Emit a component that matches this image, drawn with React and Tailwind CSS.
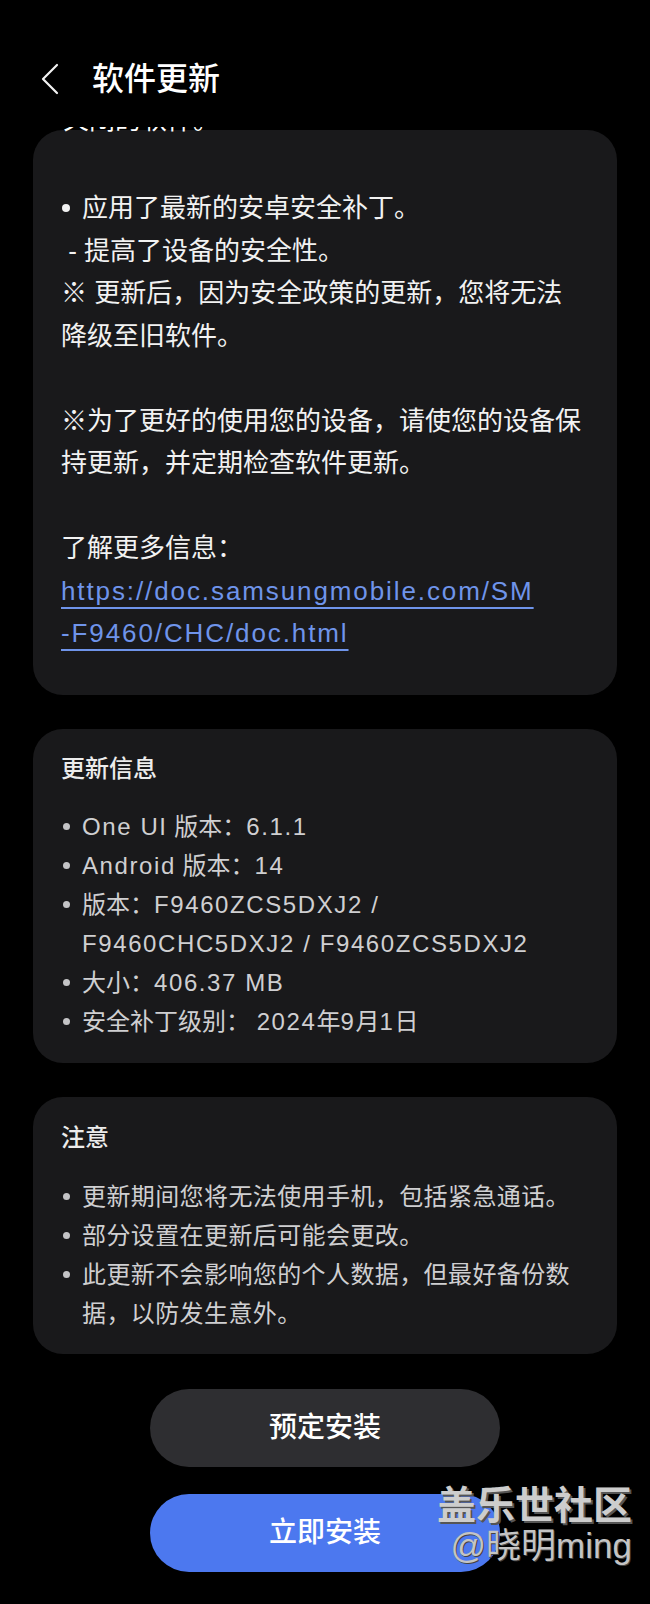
const cjk = "font-['Liberation_Sans','Noto_Sans_CJK_SC',sans-serif]";

function Lat({ children }) {
  return <span className="tracking-[1.6px]">{children}</span>;
}

function Item({ children }) {
  return (
    <li className="flex">
      <span className="w-[21px] shrink-0 flex items-center h-[39px]">
        <span className="ml-[2px] h-[7px] w-[7px] rounded-full bg-[#c4c4c6]"></span>
      </span>
      <span>{children}</span>
    </li>
  );
}

export default function App() {
  return (
    <div className={`relative w-[650px] min-h-[1604px] bg-black overflow-hidden ${cjk}`}>
      {/* header */}
      <div className="h-[127px] flex items-start pt-[59px]">
        <svg className="ml-[40px] mt-[4px]" width="20" height="32" viewBox="0 0 20 32" fill="none">
          <path d="M17 2 L3 16 L17 30" stroke="#f2f2f2" strokeWidth="2.2" strokeLinecap="round" strokeLinejoin="round" />
        </svg>
        <h1 className="ml-[32px] text-[32px] leading-[40px] font-medium text-white">软件更新</h1>
      </div>

      {/* clipped line from the scrolled notes */}
      <div className="relative z-10 h-[7px] overflow-hidden pl-[63px]">
        <p className="-mt-[27px] text-[26px] leading-[40px] text-white">关闭的软件。</p>
      </div>

      <div className="-mt-[4px] px-[33px] flex flex-col gap-[34px]">
        {/* notes card */}
        <section className="rounded-[30px] bg-[#19191b] pt-[57px] pb-[40px] px-[28px] text-[26px] leading-[42.5px] text-[#f2f2f2]">
          <p className="flex">
            <span className="w-[21px] shrink-0 flex items-center h-[42.5px]">
              <span className="ml-[1px] h-[8px] w-[8px] rounded-full bg-[#f2f2f2]"></span>
            </span>
            应用了最新的安卓安全补丁。
          </p>
          <p>&nbsp;- 提高了设备的安全性。</p>
          <p>※ 更新后，因为安全政策的更新，您将无法</p>
          <p>降级至旧软件。</p>
          <p>&nbsp;</p>
          <p>※为了更好的使用您的设备，请使您的设备保</p>
          <p>持更新，并定期检查软件更新。</p>
          <p>&nbsp;</p>
          <p>了解更多信息：</p>
          <p className="text-[#6f94ea] tracking-[1.9px]">
            <span className="underline decoration-2 underline-offset-[7px]">https://doc.samsungmobile.com/SM</span>
          </p>
          <p className="text-[#6f94ea] tracking-[1.9px]">
            <span className="underline decoration-2 underline-offset-[7px]">-F9460/CHC/doc.html</span>
          </p>
        </section>

        {/* update info card */}
        <section className="rounded-[30px] bg-[#19191b] pt-[22px] pb-[22px] px-[28px]">
          <h2 className="text-[24px] leading-[36px] font-medium text-[#ececec]">更新信息</h2>
          <ul className="mt-[20px] text-[24px] leading-[39px] text-[#cfcfd1]">
            <Item><Lat>One UI</Lat> 版本：<Lat>6.1.1</Lat></Item>
            <Item><Lat>Android</Lat> 版本：<Lat>14</Lat></Item>
            <Item>
              版本：<Lat>F9460ZCS5DXJ2 /</Lat>
              <br />
              <Lat>F9460CHC5DXJ2 / F9460ZCS5DXJ2</Lat>
            </Item>
            <Item>大小：<Lat>406.37 MB</Lat></Item>
            <Item>安全补丁级别： <Lat>2024</Lat>年<Lat>9</Lat>月<Lat>1</Lat>日</Item>
          </ul>
        </section>

        {/* notice card */}
        <section className="rounded-[30px] bg-[#19191b] pt-[23px] pb-[21px] px-[28px]">
          <h2 className="text-[24px] leading-[36px] font-medium text-[#ececec]">注意</h2>
          <ul className="mt-[21px] text-[24px] leading-[39px] tracking-[0.4px] text-[#cfcfd1]">
            <Item>更新期间您将无法使用手机，包括紧急通话。</Item>
            <Item>部分设置在更新后可能会更改。</Item>
            <Item>
              此更新不会影响您的个人数据，但最好备份数
              <br />
              据，以防发生意外。
            </Item>
          </ul>
        </section>
      </div>

      {/* actions */}
      <div className="mt-[35px] flex flex-col items-center gap-[27px] pb-[33px]">
        <button className="h-[78px] w-[350px] rounded-full bg-[#2e2e31] text-[28px] font-medium text-white">
          预定安装
        </button>
        <button className="h-[78px] w-[350px] rounded-full bg-[#4c78ef] text-[28px] font-medium text-white">
          立即安装
        </button>
      </div>

      {/* watermark */}
      <div className="absolute right-[18px] top-[1484px] flex flex-col items-end">
        <span className="text-[39px] leading-[44px] font-bold text-[#cdcdcd] [text-shadow:2px_2px_0_#555]">盖乐世社区</span>
        <span className="-mt-[3px] text-[35px] leading-[42px] text-[#c4c4c4] [text-shadow:1px_1px_0_#444]">@晓明ming</span>
      </div>
    </div>
  );
}
